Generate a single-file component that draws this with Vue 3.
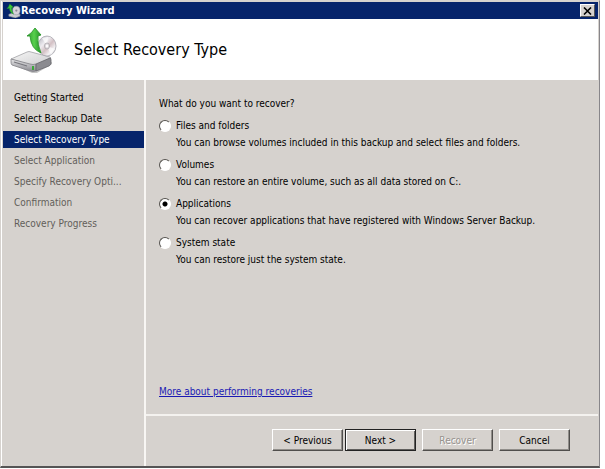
<template>
  <div class="wizard">
    <header class="title-bar">
      <svg class="title-icon" viewBox="0 0 16 16" aria-hidden="true">
        <path d="M3 12l5-2 7 2v2l-5 2-7-2z" fill="#c9cbd0" stroke="#6f7788" stroke-width="0.6" />
        <ellipse cx="11" cy="8" rx="4" ry="4.5" fill="#d5d2da" stroke="#9a9aa8" stroke-width="0.6" />
        <circle cx="11" cy="8" r="1.2" fill="#8a8696" />
        <path d="M4 1l4 3.500-2 0.500q0 4 2 7-4-2-4.500-6.500l-2.500 0.500q2-2 3-5z" fill="#3fc83a" stroke="#1f8a2a" stroke-width="0.5" />
      </svg>
      <span class="title-text">Recovery Wizard</span>
      <button class="close" type="button" aria-label="Close">
        <svg viewBox="0 0 9 8" aria-hidden="true">
          <path d="M1 0.5l7 7M8 0.5l-7 7" />
        </svg>
      </button>
    </header>

    <div class="banner">
      <svg class="banner-icon" viewBox="0 0 48 48" aria-hidden="true">
        <defs>
          <linearGradient id="disc" x1="0" y1="0" x2="1" y2="1">
            <stop offset="0" stop-color="#a9a9b4" />
            <stop offset="0.35" stop-color="#eeecf0" />
            <stop offset="0.55" stop-color="#d3c0c4" />
            <stop offset="0.75" stop-color="#f4f2f4" />
            <stop offset="1" stop-color="#a0a0a6" />
          </linearGradient>
          <linearGradient id="arrow" x1="0" y1="0" x2="1" y2="0">
            <stop offset="0" stop-color="#2b9a2b" />
            <stop offset="0.5" stop-color="#58d04e" />
            <stop offset="1" stop-color="#239126" />
          </linearGradient>
          <linearGradient id="drive-top" x1="0" y1="0" x2="1" y2="1">
            <stop offset="0" stop-color="#f6f6f6" />
            <stop offset="1" stop-color="#cdcdcf" />
          </linearGradient>
          <linearGradient id="drive-front" x1="0" y1="0" x2="0" y2="1">
            <stop offset="0" stop-color="#e6e6e8" />
            <stop offset="1" stop-color="#8a8a90" />
          </linearGradient>
        </defs>
        <path d="M2 38l20 8q3 0 6-2l14-8v2l-15 9h-5z" fill="#c4c4c4" />
        <path d="M1 33l16-7q2-1 4 0l19 5q2 1 0 2l-14 6q-3 1-6 0z" fill="url(#drive-top)" stroke="#a2a2a6" stroke-width="0.8" />
        <path d="M1 33l19 5q3 1 6 0v7q-3 1-6 0L2 39q-1-1-1-3z" fill="url(#drive-front)" stroke="#808085" stroke-width="0.8" />
        <path d="M26 38l14-6q1 0 1 2v3q0 2-2 3l-13 5z" fill="#8b8b90" stroke="#66666b" stroke-width="0.8" />
        <path d="M4 36l13 4" stroke="#77777d" stroke-width="1.2" />
        <path d="M23 40v4" stroke="#2fa82d" stroke-width="1.8" />
        <ellipse cx="37" cy="20" rx="9" ry="10" fill="url(#disc)" stroke="#a8a7ae" stroke-width="0.8" />
        <path d="M37 20l-5-8 6-1zM37 20l8 3-4 6z" fill="#fff" opacity="0.7" />
        <ellipse cx="37" cy="20" rx="2.5" ry="3" fill="#e5dfe3" stroke="#a7a4a9" stroke-width="0.8" />
        <ellipse cx="37" cy="20" rx="1" ry="1.3" fill="#fff" />
        <path d="M25 2l6 7-3 1q-1 8 3 17-10-4-11-17l-3 0q5-3 8-8z" fill="url(#arrow)" stroke="#239025" stroke-width="0.8" />
      </svg>
      <h1>Select Recovery Type</h1>
    </div>

    <div class="body">
      <ol class="steps">
        <li
          v-for="(step, index) in steps"
          :key="step"
          :class="{ active: index === current, pending: index > current }"
        >
          {{ step }}
        </li>
      </ol>

      <div class="main">
        <main class="content">
          <fieldset>
            <legend>What do you want to recover?</legend>
            <div v-for="item in options" :key="item.value" class="option">
              <input
                :id="item.value"
                v-model="selected"
                type="radio"
                name="recovery-type"
                :value="item.value"
              />
              <label :for="item.value">{{ item.label }}</label>
              <p>{{ item.description }}</p>
            </div>
          </fieldset>
          <a href="#">More about performing recoveries</a>
        </main>

        <footer class="actions">
          <div class="pair">
            <button class="btn" type="button">&lt; Previous</button>
            <button class="btn primary" type="button">Next &gt;</button>
          </div>
          <button class="btn" type="button" disabled>Recover</button>
          <button class="btn" type="button">Cancel</button>
        </footer>
      </div>
    </div>
  </div>
</template>

<script setup>
import { ref } from 'vue'

const steps = [
  'Getting Started',
  'Select Backup Date',
  'Select Recovery Type',
  'Select Application',
  'Specify Recovery Opti...',
  'Confirmation',
  'Recovery Progress'
]
const current = ref(2)

const options = [
  {
    value: 'files',
    label: 'Files and folders',
    description: 'You can browse volumes included in this backup and select files and folders.'
  },
  {
    value: 'volumes',
    label: 'Volumes',
    description: 'You can restore an entire volume, such as all data stored on C:.'
  },
  {
    value: 'applications',
    label: 'Applications',
    description: 'You can recover applications that have registered with Windows Server Backup.'
  },
  {
    value: 'system',
    label: 'System state',
    description: 'You can restore just the system state.'
  }
]
const selected = ref('applications')
</script>

<style>
body {
  background: #fff;
}

#app {
  display: flex;
  box-sizing: border-box;
  min-height: 100vh;
  padding: 0 5px 1px 0;
}
</style>

<style scoped>
.wizard {
  flex: 1;
  display: flex;
  flex-direction: column;
  box-sizing: border-box;
  padding: 1px 1px 0 2px;
  border: 1px solid #d6d2ce;
  border-right-color: #88868a;
  border-bottom: 2px solid #555;
  background: #d6d2ce;
  box-shadow: inset 1px 0 #fff;
  color: #000;
  font: 10px/17px 'DejaVu Sans Condensed', 'DejaVu Sans', sans-serif;
}

.title-bar {
  display: flex;
  align-items: center;
  height: 17px;
  padding: 0 3px;
  background: #06246b;
  color: #fff;
}

.title-icon {
  width: 15px;
  height: 15px;
}

.title-text {
  flex: 1;
  font-size: 11px;
  font-weight: bold;
}

.close {
  display: flex;
  align-items: center;
  justify-content: center;
  width: 15px;
  height: 13px;
  padding: 0;
  border: 1px solid;
  border-color: #fff #555 #555 #fff;
  background: #d6d2ce;
}

.close svg {
  width: 9px;
  height: 8px;
  fill: none;
  stroke: #000;
  stroke-width: 1.6;
}

.banner {
  display: flex;
  align-items: center;
  gap: 16px;
  height: 61px;
  padding-left: 7px;
  background: #fff;
}

.banner-icon {
  width: 48px;
  height: 48px;
}

h1 {
  margin: 0;
  color: #000;
  font-size: 16px;
  font-weight: normal;
  line-height: 20px;
}

.body {
  flex: 1;
  display: flex;
}

.steps {
  flex: none;
  display: flex;
  flex-direction: column;
  gap: 4px;
  box-sizing: border-box;
  width: 143px;
  margin: 0;
  padding: 9px 0 0;
  border-right: 2px solid #f8f6f3;
  list-style: none;
}

.steps li {
  padding-left: 11px;
  white-space: nowrap;
}

.steps .active {
  background: #06246b;
  color: #fff;
}

.steps .pending {
  color: #625e5a;
}

.main {
  flex: 1;
  display: flex;
  flex-direction: column;
}

.content {
  flex: 1;
  display: flex;
  flex-direction: column;
  align-items: flex-start;
  justify-content: space-between;
  padding: 15px 13px 14px;
}

fieldset {
  min-width: 0;
  margin: 0;
  padding: 0;
  border: 0;
}

legend {
  margin-bottom: 5px;
  padding: 0;
}

.option {
  display: grid;
  grid-template-columns: 12px 1fr;
  column-gap: 5px;
  align-items: center;
  margin-bottom: 5px;
}

.option input {
  appearance: none;
  width: 12px;
  height: 12px;
  margin: 0;
  border: 1px solid;
  border-color: #55534f #fff #fff #55534f;
  border-radius: 50%;
  background: #fff;
}

.option input:checked {
  background: radial-gradient(circle, #000 2px, #fff 3px);
}

.option p {
  grid-column: 2;
  margin: 0;
}

a {
  color: #1a1ab4;
}

.actions {
  display: flex;
  justify-content: flex-end;
  gap: 6px;
  padding: 13px 28px 15px;
  border-top: 2px solid #f4f2ef;
}

.pair {
  display: flex;
  gap: 2px;
}

.btn {
  width: 71px;
  height: 22px;
  padding: 0;
  border: 1px solid;
  border-color: #fff #504e4c #504e4c #fff;
  background: #d6d2ce;
  box-shadow: inset -1px -1px #918e8a;
  color: #000;
  font: inherit;
}

.btn.primary {
  border-color: #222;
  box-shadow: inset 1px 1px #fff, inset -1px -1px #605e5c;
}

.btn:disabled {
  color: #96928e;
  text-shadow: 1px 1px #fff;
}
</style>
